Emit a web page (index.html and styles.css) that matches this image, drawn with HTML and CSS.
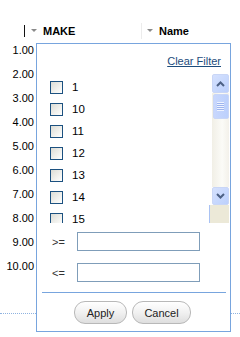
FILE: index.html
```html
<!DOCTYPE html>
<html>
<head>
<meta charset="utf-8">
<link rel="stylesheet" href="styles.css">
</head>
<body>
<div class="grid">
  <div class="hdr">
    <span class="bar"></span>
    <span class="col make"><i class="tri"></i>MAKE</span>
    <span class="col name"><i class="tri"></i>Name</span>
  </div>
  <div class="rows">
    <div class="row">1.00</div>
    <div class="row">2.00</div>
    <div class="row">3.00</div>
    <div class="row">4.00</div>
    <div class="row">5.00</div>
    <div class="row">6.00</div>
    <div class="row">7.00</div>
    <div class="row">8.00</div>
    <div class="row">9.00</div>
    <div class="row">10.00</div>
  </div>
  <div class="dotted"></div>

  <div class="popup">
    <div class="clear"><a class="clear-link">Clear Filter</a></div>
    <div class="list">
      <div class="items">
        <div class="item"><span class="cb"></span><span class="lbl">1</span></div>
        <div class="item"><span class="cb"></span><span class="lbl">10</span></div>
        <div class="item"><span class="cb"></span><span class="lbl">11</span></div>
        <div class="item"><span class="cb"></span><span class="lbl">12</span></div>
        <div class="item"><span class="cb"></span><span class="lbl">13</span></div>
        <div class="item"><span class="cb"></span><span class="lbl">14</span></div>
        <div class="item"><span class="cb"></span><span class="lbl">15</span></div>
      </div>
      <div class="scroll">
        <div class="sbtn up">
          <svg width="9" height="6" viewBox="0 0 9 6"><polyline points="1,5 4.5,1.5 8,5" fill="none" stroke="#4d6185" stroke-width="2"/></svg>
        </div>
        <div class="track">
          <div class="thumb">
            <svg width="7" height="9" viewBox="0 0 7 9"><g fill="#eef3ff"><rect x="0" y="0" width="7" height="1"/><rect x="0" y="2" width="7" height="1"/><rect x="0" y="4" width="7" height="1"/><rect x="0" y="6" width="7" height="1"/><rect x="0" y="8" width="7" height="1"/></g><g fill="#9db4ee"><rect x="0" y="1" width="7" height="1"/><rect x="0" y="3" width="7" height="1"/><rect x="0" y="5" width="7" height="1"/><rect x="0" y="7" width="7" height="1"/></g></svg>
          </div>
        </div>
        <div class="sbtn down">
          <svg width="9" height="6" viewBox="0 0 9 6"><polyline points="1,1 4.5,4.5 8,1" fill="none" stroke="#4d6185" stroke-width="2"/></svg>
        </div>
        <div class="corner"></div>
      </div>
    </div>
    <div class="cond">
      <span class="op">&gt;=</span><span class="inp"></span>
    </div>
    <div class="cond second">
      <span class="op">&lt;=</span><span class="inp"></span>
    </div>
    <div class="sep"></div>
    <div class="btns">
      <span class="btn apply">Apply</span>
      <span class="btn cancel">Cancel</span>
    </div>
  </div>
</div>
</body>
</html>
```

FILE: styles.css
```css
html, body {
  margin: 0;
  padding: 0;
  background: #fff;
}
body {
  font-family: "Liberation Sans", Arial, sans-serif;
  font-size: 11px;
  color: #000;
}
.grid {
  position: relative;
  width: 240px;
  height: 337px;
  overflow: hidden;
}
.hdr {
  margin-top: 24px;
  height: 14px;
  display: flex;
  align-items: center;
  padding-left: 24px;
}
.bar {
  width: 1px;
  height: 12px;
  background: #111;
}
.col {
  display: flex;
  align-items: center;
  font-weight: bold;
  height: 16px;
}
.tri {
  display: block;
  width: 0;
  height: 0;
  border-left: 3px solid transparent;
  border-right: 3px solid transparent;
  border-top: 3px solid #8a8a8a;
  margin-top: -2px;
}
.make {
  width: 110px;
  padding-left: 6px;
  border-right: 1px solid #ececec;
}
.make .tri { margin-right: 6px; }
.name {
  padding-left: 5px;
}
.name .tri { margin-right: 6px; }
.rows {
  display: flex;
  flex-direction: column;
}
.row {
  height: 24px;
  line-height: 24px;
  width: 34px;
  text-align: right;
}
.dotted {
  margin-top: 35px;
  border-top: 1px dotted #8fb3e0;
}
.popup {
  position: absolute;
  left: 36px;
  top: 43px;
  width: 195px;
  height: 289px;
  box-sizing: border-box;
  border: 1px solid #78a5de;
  background: #fff;
  display: flex;
  flex-direction: column;
}
.clear {
  text-align: right;
  padding: 11px 9px 0 0;
  line-height: 13px;
}
.clear-link {
  color: #1d4c7c;
  text-decoration: underline;
}
.list {
  margin-top: 6px;
  height: 149px;
  display: flex;
  margin-right: 1px;
}
.items {
  flex: 1;
  overflow: hidden;
  padding: 2px 0 0 13px;
}
.item {
  height: 22px;
  display: flex;
  align-items: flex-start;
  padding-top: 5px;
  box-sizing: border-box;
}
.cb {
  width: 13px;
  height: 13px;
  box-sizing: border-box;
  border: 1px solid #1c5180;
  background: linear-gradient(135deg, #dcdcd5 0%, #f0f0ec 55%, #ffffff 100%);
  margin-right: 9px;
}
.lbl {
  line-height: 13px;
  font-size: 11.5px;
}
.scroll {
  width: 20px;
  display: flex;
  flex-direction: column;
}
.sbtn {
  margin-left: 3px;
  width: 17px;
  box-sizing: border-box;
  border: 1px solid #c9d6f6;
  border-radius: 2px;
  background: linear-gradient(135deg, #d5e1fe 0%, #bcd0fc 100%);
  display: flex;
  align-items: center;
  justify-content: center;
}
.up { height: 19px; }
.down { height: 18px; }
.track {
  margin-left: 3px;
  width: 17px;
  height: 94px;
  background: linear-gradient(90deg, #f1efe6 0%, #fbfbf7 60%, #f3f1ea 100%);
  display: flex;
  justify-content: center;
  align-items: flex-start;
}
.thumb {
  margin-top: 1px;
  width: 16px;
  height: 25px;
  box-sizing: border-box;
  border: 1px solid #c9d6f6;
  border-radius: 2px;
  background: linear-gradient(90deg, #c8d7fd 0%, #bcd0fc 100%);
  display: flex;
  align-items: center;
  justify-content: center;
}
.corner {
  height: 18px;
  background: #ece9d8;
  border-left: 1px solid #a9c2f3;
}
.cond {
  margin-top: 9px;
  display: flex;
  align-items: center;
  padding-left: 15px;
  height: 19px;
}
.cond.second {
  margin-top: 12px;
}
.op {
  width: 25px;
  color: #333;
}
.inp {
  width: 123px;
  height: 19px;
  box-sizing: border-box;
  border: 1px solid #7f9db9;
  background: #fff;
}
.sep {
  margin: 10px 4px 0 5px;
  height: 1px;
  background: #78a5de;
}
.btns {
  margin-top: 8px;
  display: flex;
  justify-content: flex-start;
  padding-left: 37px;
  gap: 5px;
}
.btn {
  height: 23px;
  box-sizing: border-box;
  border: 1px solid #b8b8b8;
  border-radius: 11px;
  background: linear-gradient(#ffffff 0%, #f1f1f1 50%, #dedede 100%);
  color: #222;
  display: flex;
  align-items: center;
  justify-content: center;
}
.apply { width: 53px; }
.cancel { width: 59px; }
```
